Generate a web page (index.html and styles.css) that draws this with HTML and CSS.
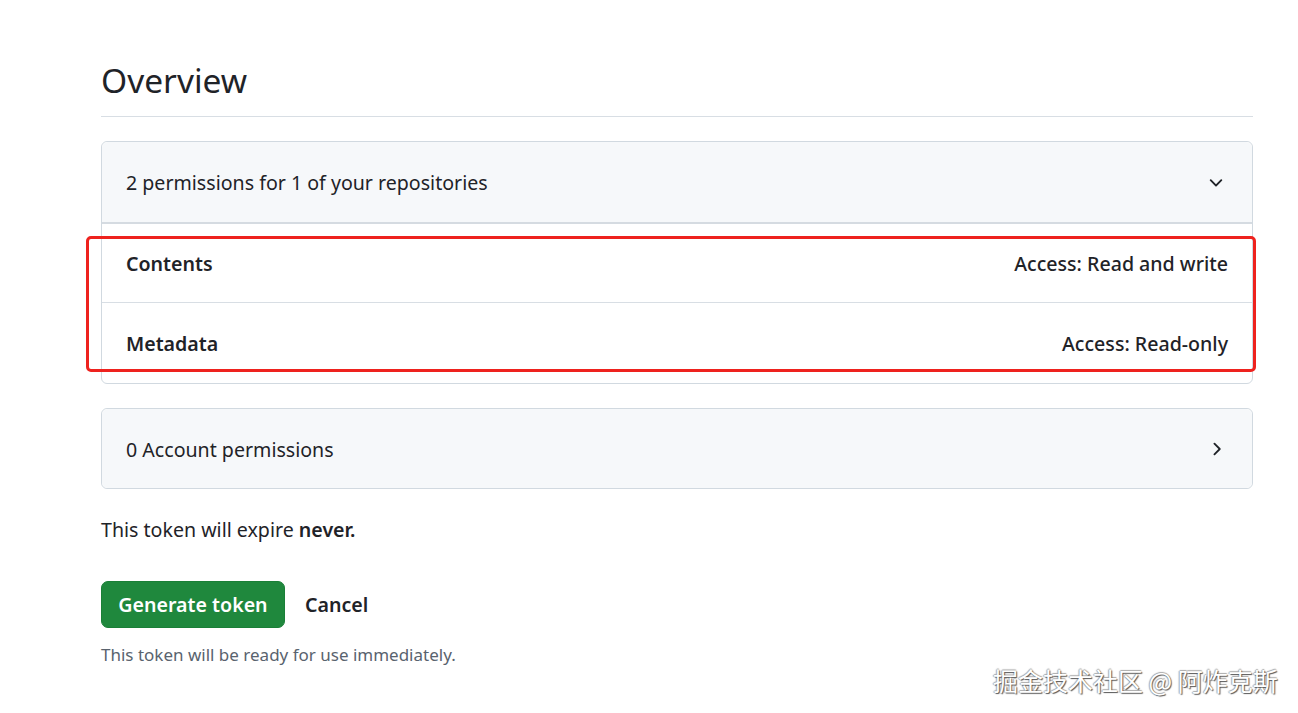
FILE: index.html
```html
<!DOCTYPE html>
<html lang="en">
<head>
<meta charset="utf-8">
<title>Overview</title>
<link rel="stylesheet" href="styles.css">
</head>
<body>
<main class="page">
  <h2 class="title">Overview</h2>

  <section class="panel">
    <div class="panel-head">
      <span>2 permissions for 1 of your repositories</span>
      <svg class="chev" width="20" height="20" viewBox="0 0 16 16"><path d="M12.78 5.22a.749.749 0 0 1 0 1.06l-4.25 4.250a.749.749 0 0 1-1.06 0L3.22 6.28a.749.749 0 1 1 1.06-1.06L8 8.939l3.720-3.719a.749.749 0 0 1 1.06 0Z" fill="#1f2328"/></svg>
    </div>
    <div class="row">
      <span class="name">Contents</span>
      <span class="access">Access: Read and write</span>
    </div>
    <div class="row">
      <span class="name">Metadata</span>
      <span class="access">Access: Read-only</span>
    </div>
    <div class="highlight"></div>
  </section>

  <section class="panel closed">
    <div class="panel-head">
      <span>0 Account permissions</span>
      <svg class="chev" width="20" height="20" viewBox="0 0 16 16"><path d="M6.22 3.22a.75.75 0 0 1 1.06 0l4.25 4.25a.75.75 0 0 1 0 1.06l-4.25 4.25a.751.751 0 0 1-1.042-.018.751.751 0 0 1-.018-1.042L9.94 8 6.22 4.28a.75.75 0 0 1 0-1.06Z" fill="#1f2328"/></svg>
    </div>
  </section>

  <p class="expire">This token will expire <strong>never.</strong></p>

  <div class="actions">
    <button class="btn-primary">Generate token</button>
    <a class="cancel">Cancel</a>
  </div>
  <p class="note">This token will be ready for use immediately.</p>
</main>
<div class="watermark">掘金技术社区 @ 阿炸克斯</div>
</body>
</html>
```

FILE: styles.css
```css
*, *::before, *::after { box-sizing: border-box; }
html, body {
  margin: 0;
  padding: 0;
  background: #ffffff;
}
body {
  font-family: "Noto Sans", "Open Sans", sans-serif;
  color: #1f2328;
  width: 1298px;
  height: 713px;
  position: relative;
  overflow: hidden;
}
.page {
  margin-left: 101px;
  width: 1152px;
  padding-top: 56px;
}
.title {
  margin: 0;
  font-weight: 400;
  font-size: 33.5px;
  line-height: 48px;
  height: 61px;
  border-bottom: 1px solid #d8dee4;
  letter-spacing: 0;
}
.panel {
  margin-top: 24px;
  border: 1px solid #d1d9e0;
  border-radius: 6px;
  position: relative;
}
.panel-head {
  background: #f6f8fa;
  height: 82px;
  display: flex;
  align-items: center;
  justify-content: space-between;
  padding: 1px 26px 0 24px;
  font-size: 19.6px;
  border-radius: 6px 6px 0 0;
  border-bottom: 2px solid #d5dbe1;
}
.closed .panel-head {
  border-bottom: none;
  border-radius: 6px;
  height: 79px;
  padding-top: 1px;
}
.chev { display: block; }
.row {
  height: 78px;
  display: flex;
  align-items: center;
  justify-content: space-between;
  padding: 1px 24px 0;
  font-size: 19.6px;
  font-weight: 600;
}
.row + .row {
  border-top: 1px solid #d8dee4;
  height: 81px;
}
.access { font-weight: 500; }
.highlight {
  position: absolute;
  left: -16px;
  right: -4px;
  top: 94px;
  height: 136px;
  border: 3px solid #ee221e;
  border-radius: 5px;
  pointer-events: none;
}
.expire {
  margin: 27px 0 0;
  font-size: 19.6px;
  line-height: 28px;
}
.expire strong { font-weight: 600; }
.actions {
  margin-top: 37px;
  display: flex;
  align-items: center;
  gap: 20px;
}
.btn-primary {
  background: #1f883d;
  color: #ffffff;
  border: 1px solid #1a7f37;
  border-radius: 7px;
  height: 47px;
  padding: 0;
  font-family: inherit;
  font-size: 19.6px;
  font-weight: 600;
  width: 184px;
}
.cancel {
  font-size: 19.6px;
  font-weight: 600;
  color: #1f2328;
}
.note {
  margin: 15px 0 0;
  font-size: 17px;
  color: #59636e;
}
.watermark {
  position: absolute;
  left: 993px;
  top: 662px;
  font-family: "Noto Sans CJK SC", sans-serif;
  font-size: 25px;
  color: #ffffff;
  text-shadow: 1px 1px 1px #555, -1px 0 1px #aaa, 0 -1px 1px #aaa;
  letter-spacing: 0;
}
```
